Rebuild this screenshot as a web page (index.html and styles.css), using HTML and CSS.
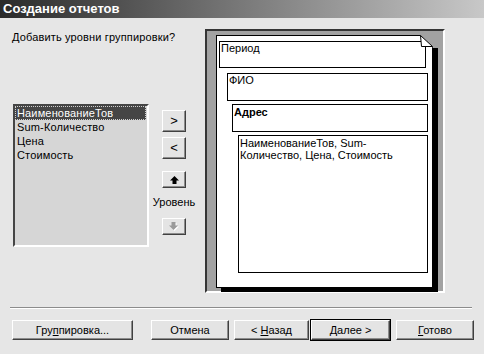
FILE: index.html
```html
<!DOCTYPE html>
<html>
    <head>
        <meta charset="UTF-8">
        <title>Создание отчетов</title>
        <link rel="stylesheet" href="styles.css">
    </head>
    <body>
        <div class="titlebar">Создание отчетов</div>

        <div class="main">
            <div class="left">
                <p class="prompt">Добавить уровни группировки?</p>
                <div class="picker">
                    <ul class="fields">
                        <li class="selected">НаименованиеТов</li>
                        <li>Sum-Количество</li>
                        <li>Цена</li>
                        <li>Стоимость</li>
                    </ul>
                    <div class="movers">
                        <button class="btn tool">&gt;</button>
                        <button class="btn tool less">&lt;</button>
                        <button class="btn tool arrow up">
                            <svg width="9" height="8" viewBox="0 0 9 8"><polygon points="4.5,0 9,4.5 6.5,4.5 6.5,8 2.5,8 2.5,4.5 0,4.5" fill="#000"/></svg>
                        </button>
                        <span class="level">Уровень</span>
                        <button class="btn tool arrow down">
                            <svg width="10" height="9" viewBox="0 0 10 9"><polygon points="5.5,9 10,4.5 7.5,4.5 7.5,1 3.5,1 3.5,4.5 1,4.5" fill="#fff"/><polygon points="4.5,8 9,3.5 6.5,3.5 6.5,0 2.5,0 2.5,3.5 0,3.5" fill="#9a9a9a"/></svg>
                        </button>
                    </div>
                </div>
            </div>

            <div class="preview">
                <div class="page">
                    <svg class="dogear" width="18" height="13" viewBox="0 0 18 13">
                        <polygon points="0,0 18,0 18,13 13,13 12.5,12" fill="#a2a2a2"/>
                        <polygon points="0.5,0.5 12.5,11.5 1.5,11.5" fill="#fff" stroke="#000" stroke-width="1"/>
                    </svg>
                    <div class="band period">Период</div>
                    <div class="band person">ФИО</div>
                    <div class="band address">Адрес</div>
                    <div class="band detail">НаименованиеТов, Sum-<br>Количество, Цена, Стоимость</div>
                </div>
            </div>
        </div>

        <div class="sep"></div>

        <div class="actions">
            <button class="btn wide">Гру<u>п</u>пировка...</button>
            <button class="btn cancel">Отмена</button>
            <button class="btn back">&lt; <u>Н</u>азад</button>
            <button class="btn next"><u>Д</u>алее &gt;</button>
            <button class="btn finish"><u>Г</u>отово</button>
        </div>
    </body>
</html>
```

FILE: styles.css
```css
html {
    width: 100%;
    height: 100%;
}

body {
    margin: 0;
    width: 484px;
    height: 354px;
    overflow: hidden;
    background: #e6e6e6;
    font-family: "Liberation Sans", Arial, sans-serif;
    font-size: 11px;
    color: #000;
}

.titlebar {
    height: 18px;
    line-height: 18px;
    padding-left: 3px;
    background: linear-gradient(90deg, #2a2a2a, #c8c8c8);
    color: #fff;
    font-weight: bold;
    font-size: 13px;
}

.main {
    display: flex;
    height: 275px;
    box-sizing: border-box;
    padding-top: 11px;
}

.left {
    width: 205px;
    box-sizing: border-box;
    padding-left: 12px;
}

.prompt {
    margin: 1px 0 0 0;
    line-height: 14px;
    letter-spacing: 0.15px;
}

.picker {
    display: flex;
    margin-top: 60px;
    margin-left: 1px;
}

.fields {
    list-style-type: none;
    margin: 0;
    padding: 0;
    width: 136px;
    height: 143px;
    box-sizing: border-box;
    border: 2px solid;
    border-color: #454545 #fff #fff #454545;
    background: #d6d6d6;
}

.fields li {
    line-height: 14px;
    padding-left: 2px;
    margin-right: 1px;
    letter-spacing: 0.15px;
}

.fields .selected {
    background: #454545;
    color: #fff;
    outline: 1px dotted #cfcfcf;
    outline-offset: -1px;
}

.movers {
    display: flex;
    flex-direction: column;
    align-items: center;
    width: 44px;
    margin-left: 3px;
    padding-top: 6px;
}

.btn {
    box-sizing: border-box;
    border: 1px solid;
    border-color: #fff #404040 #404040 #fff;
    box-shadow: inset -1px -1px 0 #8c8c8c;
    background: #e4e4e4;
    font-family: inherit;
    font-size: 11px;
    color: #000;
    padding: 0;
    margin: 0;
    height: 20px;
}

.tool {
    width: 24px;
    height: 22px;
    font-size: 13px;
    line-height: 18px;
}

.less {
    margin-top: 5px;
}

.arrow {
    height: 17px;
    display: flex;
    align-items: center;
    justify-content: center;
}

.up {
    margin-top: 12px;
}

.level {
    margin-top: 7px;
    line-height: 14px;
}

.down {
    margin-top: 9px;
}

.preview {
    width: 240px;
    height: 264px;
    box-sizing: border-box;
    border: 2px solid;
    border-color: #353535 #fff #fff #353535;
    background: #a2a2a2;
    padding: 4px 0 0 9px;
}

.page {
    position: relative;
    width: 217px;
    height: 253px;
    box-sizing: border-box;
    border: 1px solid #000;
    background: #fff;
    box-shadow: 5px 4px 0 #000;
}

.dogear {
    position: absolute;
    top: -1px;
    right: -6px;
    display: block;
}

.band {
    box-sizing: border-box;
    border: 1px solid #000;
    padding: 0 1px;
    line-height: 13px;
}

.period {
    margin: 5px 0 0 2px;
    width: 207px;
    height: 27px;
}

.person {
    margin: 5px 0 0 10px;
    width: 201px;
    height: 28px;
}

.address {
    margin: 3px 0 0 15px;
    width: 196px;
    height: 28px;
    padding-top: 1px;
    font-weight: bold;
}

.detail {
    margin: 3px 0 0 21px;
    width: 190px;
    height: 138px;
    padding-top: 1px;
    line-height: 12px;
}

.sep {
    margin: 14px 12px 0 10px;
    border-top: 1px solid #8c8c8c;
    border-bottom: 1px solid #fff;
}

.actions {
    display: flex;
    margin-top: 11px;
    padding-left: 12px;
}

.wide {
    width: 121px;
}

.cancel {
    width: 78px;
    margin-left: 18px;
}

.back {
    width: 75px;
    margin-left: 5px;
}

.next {
    width: 79px;
    margin-left: 2px;
    outline: 1px solid #000;
}

.finish {
    width: 78px;
    margin-left: 6px;
}
```
